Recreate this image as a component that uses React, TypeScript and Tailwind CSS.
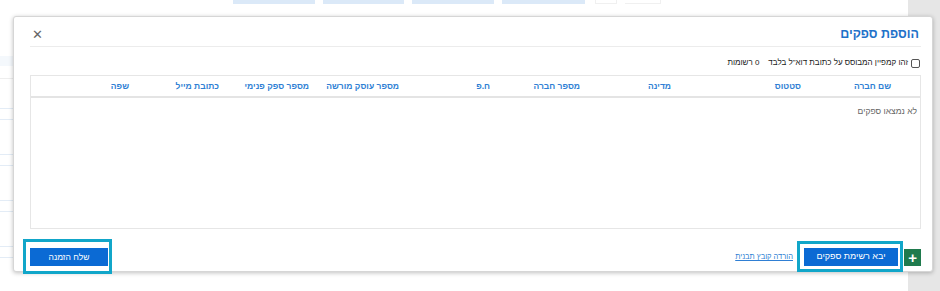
import React from 'react';

const columns = [
  { label: 'שם חברה', width: 'w-[90px]' },
  { label: 'סטטוס', width: 'w-[130px]' },
  { label: 'מדינה', width: 'w-[91px]' },
  { label: 'מספר חברה', width: 'w-[90px]' },
  { label: 'ח.פ', width: 'w-[91px]' },
  { label: 'מספר עוסק מורשה', width: 'w-[90px]' },
  { label: 'מספר ספק פנימי', width: 'w-[90px]' },
  { label: 'כתובת מייל', width: 'w-[90px]' },
  { label: 'שפה', width: 'flex-1' },
];

const BackgroundPage: React.FC = () => (
  <div className="flex h-full w-full">
    <div className="relative flex-1 bg-white">
      {/* faint tabs at the top of the page */}
      <div className="flex gap-[8px] pl-[233px]">
        <div className="h-[4px] w-[82px] bg-[#dbe9f8]" />
        <div className="h-[4px] w-[81px] bg-[#dbe9f8]" />
        <div className="h-[4px] w-[82px] bg-[#dbe9f8]" />
        <div className="h-[4px] w-[83px] bg-[#dbe9f8]" />
        <div className="ml-[2px] h-[4px] w-[22px] border border-t-0 border-[#f0f0f0]" />
        <div className="h-[4px] w-[36px] border border-t-0 border-l-0 border-[#f0f0f0]" />
      </div>
      {/* faint fields at the left edge */}
      <div className="flex w-[14px] flex-col pt-[52px]">
        <div className="h-[10px] overflow-hidden bg-[#f4f8fc]" />
        <div className="mt-[12px] h-px bg-[#eeeeee]" />
        <div className="mt-[29px] h-[12px] border border-l-0 border-[#e3ecf6]" />
        <div className="mt-[34px] h-[12px] border border-l-0 border-[#e3ecf6]" />
        <div className="mt-[34px] h-[12px] border border-l-0 border-[#e3ecf6]" />
        <div className="mt-[34px] h-[12px] border border-l-0 border-[#e3ecf6]" />
      </div>
    </div>
    <div className="w-[32px] bg-[#e6e6e6]" />
  </div>
);

const App: React.FC = () => {
  return (
    <div
      className="relative h-[291px] w-[940px] overflow-hidden bg-white"
      style={{ fontFamily: '"Liberation Sans", Arial, sans-serif' }}
    >
      <BackgroundPage />

      {/* modal */}
      <div
        dir="rtl"
        className="absolute left-[13px] top-[16px] flex h-[256px] w-[920px] flex-col rounded-[3px] border border-[#d6d6d6] bg-white pl-[16px] pr-[11px] shadow-[0_1px_4px_rgba(0,0,0,0.25)]"
      >
        <div className="flex h-[30px] items-center justify-between border-b border-[#ececec] pt-[6px]">
          <h2 className="mr-[2px] text-[12.5px] font-bold text-[#1f72c9]">הוספת ספקים</h2>
          <button className="ml-[2px] text-[13px] leading-none text-[#666]">✕</button>
        </div>

        <div className="flex h-[28px] items-center gap-[9px] pr-[1px] pt-[4px] text-[8px] text-[#222]">
          <label className="flex items-center gap-[3px]">
            <span className="inline-block h-[9px] w-[9px] rounded-[2px] border border-[#555] bg-white" />
            <span>זהו קמפיין המבוסס על כתובת דוא"ל בלבד</span>
          </label>
          <span>0 רשומות</span>
        </div>

        <div className="flex h-[154px] flex-col border border-[#e6e6e6]">
          <div className="flex h-[22px] items-center border-b-2 border-[#e4e4e4] pr-[29px]">
            {columns.map((col) => (
              <div key={col.label} className={`${col.width} text-[8.5px] font-bold text-[#2f7fd4] whitespace-nowrap`}>
                {col.label}
              </div>
            ))}
          </div>
          <div className="pr-[3px] pt-[7px] text-[8.5px] text-[#666]">לא נמצאו ספקים</div>
        </div>

        <div className="mt-auto mb-[5px] flex h-[18px] items-center">
          <button className="flex h-[17px] w-[17px] items-center justify-center bg-[#1f7a4d] text-[15px] font-bold leading-none text-white">
            +
          </button>
          <button className="mr-[6px] h-[18px] w-[94px] bg-[#0b6ad4] text-[9px] text-white">יבא רשימת ספקים</button>
          <a className="mr-[11px] text-[7.5px] text-[#2f7fd4] underline">הורדה קובץ תבנית</a>
          <button className="mr-auto h-[18px] w-[78px] bg-[#0b6ad4] text-[8.5px] text-white">שלח הזמנה</button>
        </div>
      </div>

      {/* highlight frames */}
      <div className="absolute left-[797px] top-[241px] h-[31px] w-[106px] border-[3px] border-[#11a6c9]" />
      <div className="absolute left-[23px] top-[239px] h-[35px] w-[89px] border-[3px] border-[#11a6c9]" />
    </div>
  );
};

export default App;
